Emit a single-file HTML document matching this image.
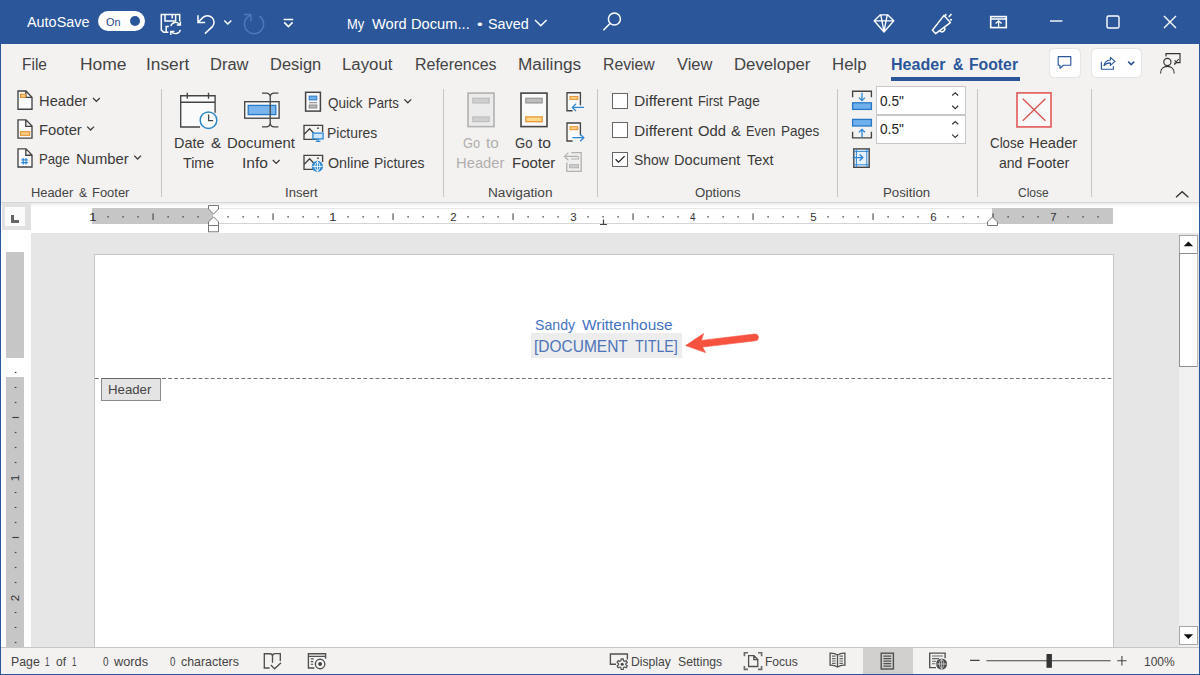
<!DOCTYPE html><html><head><meta charset="utf-8"><title>Word</title><style>
html,body{margin:0;padding:0}
body{width:1200px;height:675px;overflow:hidden;position:relative;background:#fff;font-family:"Liberation Sans",sans-serif}
.abs{position:absolute}
.t{position:absolute;white-space:nowrap;line-height:1;transform-origin:0 0}
.sep{top:88.5px;width:1px;height:108.5px;background:#c8c6c4}
.cb{width:15.6px;height:15.4px;background:#fff;border:1px solid #666;box-sizing:border-box}
.spin{width:90.2px;height:28.6px;background:#fff;border:1px solid #c8c8c8;box-sizing:border-box}
</style></head><body>
<!-- backgrounds -->
<div class="abs" style="left:0;top:0;width:1200px;height:44px;background:#2b579a"></div>
<div class="abs" style="left:0;top:44px;width:1200px;height:158px;background:#f3f2f1"></div>
<div class="abs" style="left:0;top:202px;width:1200px;height:1px;background:#d8d6d4"></div>
<div class="abs" style="left:0;top:203px;width:1200px;height:30px;background:#fff"></div>
<div class="abs" style="left:0;top:203px;width:1200px;height:4px;background:linear-gradient(#ebebeb,#fff)"></div>
<div class="abs" style="left:0;top:233px;width:31px;height:415px;background:#fff"></div>
<div class="abs" style="left:31px;top:233px;width:1169px;height:415px;background:#e6e6e6"></div>
<!-- page -->
<div class="abs" style="left:94px;top:254px;width:1018px;height:394px;background:#fff;border:1px solid #c6c6c6;border-bottom:none"></div>
<!-- status bar -->
<div class="abs" style="left:0;top:647px;width:1200px;height:28px;background:#f3f2f1;border-top:1px solid #c8c6c4;box-sizing:border-box"></div>
<div class="abs" style="left:863px;top:648px;width:49.7px;height:25.7px;background:#d1d0ce"></div>
<!-- window border -->
<div class="abs" style="left:0;top:44px;width:1.2px;height:631px;background:#2b579a"></div>
<div class="abs" style="left:1198.6px;top:44px;width:1.4px;height:631px;background:#2b579a"></div>
<div class="abs" style="left:0;top:673.7px;width:1200px;height:1.3px;background:#2b579a"></div>

<div class="abs" style="left:1.5px;top:203px;width:29px;height:27.3px;background:#e1e1e1"></div>
<div class="abs" style="left:4.7px;top:206.5px;width:20.7px;height:19.7px;background:#fbfbfb"></div>
<div class="abs" style="left:11.2px;top:215px;width:2.8px;height:8px;background:#666"></div>
<div class="abs" style="left:11.2px;top:220px;width:7.7px;height:3px;background:#666"></div>
<div class="abs" style="left:92px;top:207.5px;width:121px;height:16.5px;background:#c6c6c6"></div>
<div class="abs" style="left:213px;top:207.5px;width:779px;height:16.5px;background:#fff;border-top:1px solid #e8e8e8;border-bottom:1px solid #d4d4d4;box-sizing:border-box"></div>
<div class="abs" style="left:992px;top:207.5px;width:121px;height:16.5px;background:#c6c6c6"></div>
<svg class="abs" style="left:0;top:203px" width="1200" height="32" viewBox="0 203 1200 32"><rect x="107.5" y="216" width="1.2" height="1.6" fill="#444"/><rect x="122.5" y="216" width="1.2" height="1.6" fill="#444"/><rect x="137.5" y="216" width="1.2" height="1.6" fill="#444"/><rect x="152.5" y="213.4" width="1.1" height="6.5" fill="#444"/><rect x="167.5" y="216" width="1.2" height="1.6" fill="#444"/><rect x="182.5" y="216" width="1.2" height="1.6" fill="#444"/><rect x="197.5" y="216" width="1.2" height="1.6" fill="#444"/><rect x="227.5" y="216" width="1.2" height="1.6" fill="#444"/><rect x="242.5" y="216" width="1.2" height="1.6" fill="#444"/><rect x="257.5" y="216" width="1.2" height="1.6" fill="#444"/><rect x="272.5" y="213.4" width="1.1" height="6.5" fill="#444"/><rect x="287.5" y="216" width="1.2" height="1.6" fill="#444"/><rect x="302.5" y="216" width="1.2" height="1.6" fill="#444"/><rect x="317.5" y="216" width="1.2" height="1.6" fill="#444"/><rect x="347.5" y="216" width="1.2" height="1.6" fill="#444"/><rect x="362.5" y="216" width="1.2" height="1.6" fill="#444"/><rect x="377.5" y="216" width="1.2" height="1.6" fill="#444"/><rect x="392.5" y="213.4" width="1.1" height="6.5" fill="#444"/><rect x="407.5" y="216" width="1.2" height="1.6" fill="#444"/><rect x="422.5" y="216" width="1.2" height="1.6" fill="#444"/><rect x="437.5" y="216" width="1.2" height="1.6" fill="#444"/><rect x="467.5" y="216" width="1.2" height="1.6" fill="#444"/><rect x="482.5" y="216" width="1.2" height="1.6" fill="#444"/><rect x="497.5" y="216" width="1.2" height="1.6" fill="#444"/><rect x="512.5" y="213.4" width="1.1" height="6.5" fill="#444"/><rect x="527.5" y="216" width="1.2" height="1.6" fill="#444"/><rect x="542.5" y="216" width="1.2" height="1.6" fill="#444"/><rect x="557.5" y="216" width="1.2" height="1.6" fill="#444"/><rect x="587.5" y="216" width="1.2" height="1.6" fill="#444"/><rect x="602.5" y="216" width="1.2" height="1.6" fill="#444"/><rect x="617.5" y="216" width="1.2" height="1.6" fill="#444"/><rect x="632.5" y="213.4" width="1.1" height="6.5" fill="#444"/><rect x="647.5" y="216" width="1.2" height="1.6" fill="#444"/><rect x="662.5" y="216" width="1.2" height="1.6" fill="#444"/><rect x="677.5" y="216" width="1.2" height="1.6" fill="#444"/><rect x="707.5" y="216" width="1.2" height="1.6" fill="#444"/><rect x="722.5" y="216" width="1.2" height="1.6" fill="#444"/><rect x="737.5" y="216" width="1.2" height="1.6" fill="#444"/><rect x="752.5" y="213.4" width="1.1" height="6.5" fill="#444"/><rect x="767.5" y="216" width="1.2" height="1.6" fill="#444"/><rect x="782.5" y="216" width="1.2" height="1.6" fill="#444"/><rect x="797.5" y="216" width="1.2" height="1.6" fill="#444"/><rect x="827.5" y="216" width="1.2" height="1.6" fill="#444"/><rect x="842.5" y="216" width="1.2" height="1.6" fill="#444"/><rect x="857.5" y="216" width="1.2" height="1.6" fill="#444"/><rect x="872.5" y="213.4" width="1.1" height="6.5" fill="#444"/><rect x="887.5" y="216" width="1.2" height="1.6" fill="#444"/><rect x="902.5" y="216" width="1.2" height="1.6" fill="#444"/><rect x="917.5" y="216" width="1.2" height="1.6" fill="#444"/><rect x="947.5" y="216" width="1.2" height="1.6" fill="#444"/><rect x="962.5" y="216" width="1.2" height="1.6" fill="#444"/><rect x="977.5" y="216" width="1.2" height="1.6" fill="#444"/><rect x="992.5" y="213.4" width="1.1" height="6.5" fill="#444"/><rect x="1007.5" y="216" width="1.2" height="1.6" fill="#444"/><rect x="1022.5" y="216" width="1.2" height="1.6" fill="#444"/><rect x="1037.5" y="216" width="1.2" height="1.6" fill="#444"/><rect x="1067.5" y="216" width="1.2" height="1.6" fill="#444"/><rect x="1082.5" y="216" width="1.2" height="1.6" fill="#444"/><rect x="1097.5" y="216" width="1.2" height="1.6" fill="#444"/><path d="M603.5 219.5v5M600 224.5h7" stroke="#444" stroke-width="1.2" fill="none"/><path d="M208.5 205.5h10v3.5l-5 5.2l-5-5.2z" fill="#fff" stroke="#777" stroke-width="1"/><path d="M208.5 225.5v-3.6l5-5l5 5v3.6z" fill="#fff" stroke="#777" stroke-width="1"/><rect x="208.5" y="225.5" width="10" height="6.3" fill="#fff" stroke="#777" stroke-width="1"/><path d="M987.5 225.5v-3.6l5-5l5 5v3.6z" fill="#fff" stroke="#777" stroke-width="1"/></svg>
<div class="abs" style="left:5.6px;top:252.4px;width:18px;height:105.4px;background:#c6c6c6"></div>
<div class="abs" style="left:5.6px;top:357.8px;width:18px;height:19.6px;background:#fff"></div>
<div class="abs" style="left:5.6px;top:377.4px;width:18px;height:270px;background:#c6c6c6"></div>
<svg class="abs" style="left:0;top:350px" width="31" height="298" viewBox="0 350 31 298"><rect x="14.8" y="371.9" width="1.6" height="1.2" fill="#444"/><rect x="14.8" y="386.9" width="1.6" height="1.2" fill="#444"/><rect x="14.8" y="401.9" width="1.6" height="1.2" fill="#444"/><rect x="12.4" y="416.9" width="6.5" height="1.2" fill="#444"/><rect x="14.8" y="431.9" width="1.6" height="1.2" fill="#444"/><rect x="14.8" y="446.9" width="1.6" height="1.2" fill="#444"/><rect x="14.8" y="461.9" width="1.6" height="1.2" fill="#444"/><rect x="14.8" y="491.9" width="1.6" height="1.2" fill="#444"/><rect x="14.8" y="506.9" width="1.6" height="1.2" fill="#444"/><rect x="14.8" y="521.9" width="1.6" height="1.2" fill="#444"/><rect x="12.4" y="536.9" width="6.5" height="1.2" fill="#444"/><rect x="14.8" y="551.9" width="1.6" height="1.2" fill="#444"/><rect x="14.8" y="566.9" width="1.6" height="1.2" fill="#444"/><rect x="14.8" y="581.9" width="1.6" height="1.2" fill="#444"/><rect x="14.8" y="611.9" width="1.6" height="1.2" fill="#444"/><rect x="14.8" y="626.9" width="1.6" height="1.2" fill="#444"/><rect x="14.8" y="641.9" width="1.6" height="1.2" fill="#444"/></svg>
<!-- toggle pill -->
<div class="abs" style="left:98px;top:11px;width:47px;height:20.4px;border-radius:10.2px;background:#fff"></div>
<div class="abs" style="left:130px;top:16.3px;width:10px;height:10px;border-radius:5px;background:#2b579a"></div>
<!-- tab underline -->
<div class="abs" style="left:891px;top:77px;width:129px;height:3.6px;background:#2b579a"></div>
<!-- comment/share buttons -->
<div class="abs" style="left:1049.7px;top:48.7px;width:30.6px;height:28.8px;border-radius:4px;background:#fff;box-shadow:0 0 1.5px rgba(0,0,0,.25)"></div>
<div class="abs" style="left:1091.7px;top:48.7px;width:49.6px;height:28.8px;border-radius:4px;background:#fff;box-shadow:0 0 1.5px rgba(0,0,0,.25)"></div>
<!-- ribbon separators -->
<div class="abs sep" style="left:161px"></div>
<div class="abs sep" style="left:443px"></div>
<div class="abs sep" style="left:597px"></div>
<div class="abs sep" style="left:837px"></div>
<div class="abs sep" style="left:976.5px"></div>
<div class="abs sep" style="left:1090.5px"></div>
<!-- checkboxes -->
<div class="abs cb" style="left:612px;top:93.3px"></div>
<div class="abs cb" style="left:612px;top:122.4px"></div>
<div class="abs cb" style="left:612px;top:151.5px"></div>
<svg class="abs" style="left:612px;top:151.5px" width="16" height="16" viewBox="0 0 16 16"><path d="M3.6 7.3l3 2.9l6-6.1" stroke="#222" stroke-width="1.3" fill="none"/></svg>
<!-- spin boxes -->
<div class="abs spin" style="left:876.3px;top:86.4px"></div>
<div class="abs spin" style="left:876.3px;top:115px"></div>
<svg class="abs" style="left:948px;top:86px" width="14" height="58" viewBox="948 86 14 58" fill="none" stroke="#333" stroke-width="1.2"><path d="M952.200 95.500l3-2.800l3 2.800M952.200 105.800l3 2.800l3-2.800M952.200 124.300l3-2.800l3 2.800M952.200 134.600l3 2.800l3-2.800"/></svg>
<!-- collapse chevron -->
<svg class="abs" style="left:1174px;top:189px" width="16" height="10" viewBox="1174 189 16 10" fill="none" stroke="#333" stroke-width="1.3"><path d="M1176 197.3l6.2-5.6l6.2 5.6"/></svg>

<!-- doc content -->
<div class="abs" style="left:530.8px;top:333.2px;width:151.2px;height:24.8px;background:#ededed"></div>

<svg class="abs" style="left:94px;top:376px" width="1020" height="4" viewBox="94 376 1020 4"><path d="M95 378.5H1113" stroke="#707070" stroke-width="1" stroke-dasharray="3.7 2.4"/></svg>
<div class="abs" style="left:101px;top:377.7px;width:59.5px;height:22.9px;background:#e4e4e4;border:1px solid #8c8c8c;border-top:1.3px solid #666;box-sizing:border-box"></div>
<svg class="abs" style="left:680px;top:326px" width="84" height="32" viewBox="680 326 84 32"><path d="M685.600 345.600L703.600 333.600L701.400 340.400L754.600 334A3.400 3.400 0 0 1 755.400 340.800L702.500 347.100L705.500 352.600Z" fill="#f6523f" stroke="#f6523f" stroke-width="0.600" stroke-linejoin="round"/></svg>
<!-- scrollbar -->
<div class="abs" style="left:1179px;top:235px;width:19.3px;height:412px;background:#f0f0f0"></div>
<div class="abs" style="left:1179px;top:235.3px;width:18.8px;height:18.4px;background:#fff;border:1px solid #a6a6a6;box-sizing:border-box"></div>
<div class="abs" style="left:1179px;top:253.4px;width:18.8px;height:113.4px;background:#fff;border:1px solid #8e8e8e;border-right-color:#bdbdbd;box-sizing:border-box"></div>
<div class="abs" style="left:1179px;top:626px;width:18.8px;height:18.8px;background:#fff;border:1px solid #a6a6a6;box-sizing:border-box"></div>
<svg class="abs" style="left:1179px;top:235px" width="19" height="412" viewBox="1179 235 19 412"><path d="M1183.6 246.2h9.6l-4.8-4.8z" fill="#111"/><path d="M1183.6 634.2h9.6l-4.8 4.8z" fill="#111"/></svg>

<!-- title bar icons -->
<svg class="abs" style="left:0;top:0" width="1200" height="44" viewBox="0 0 1200 44" fill="none" stroke="#fff" stroke-width="1.5">
<!-- save -->
<path d="M168.400 32.200h-4.800l-2.300-2.300v-15.300h18.400v6.600"/>
<path d="M165 14.800v6.200h10.600v-6.200M172.200 14.800v3.600"/>
<path d="M166.200 32v-5.600h2.600"/>
<path d="M170.800 26.200a5 5 0 0 1 9-1.600M180.400 21.400v3.600h-3.600M180.400 29.800a5 5 0 0 1 -9 1.600M170.800 35v-3.600h3.600" stroke-width="1.4"/>
<!-- undo -->
<path d="M198 15.2v7.2h7.2"/>
<path d="M198.4 22l4.6-4.6a6.6 6.6 0 0 1 9.6 9l-7.7 7.2"/>
<path d="M224.3 20.6l3.5 3.5l3.5-3.5" stroke-width="1.4"/>
<!-- redo faded -->
<path d="M250.900 14.500H244.200M250.900 14.500V21.300M250.600 14.800L247.400 17.200A9.600 9.600 0 1 0 259.400 16.100" stroke="#5079bb" stroke-width="1.400"/>
<!-- qat -->
<path d="M283.6 19.4h9.6M284.2 22.4l4.2 4.2l4.2-4.2"/>
<!-- search -->
<circle cx="614.4" cy="19" r="6"/><path d="M610 23.4l-6.6 6.8"/>
<!-- diamond -->
<path d="M880.400 14.800H887.600L893.800 20.800L884 32L874.200 20.800ZM874.400 20.800H893.600M880.800 15L884 31.600M887.200 15L884 31.600" stroke-linejoin="round" stroke-width="1.350"/>
<!-- megaphone -->
<path d="M944 15.400L950.400 22.600L935.600 33.600L932.400 30.200zM939.800 30.600a2.700 2.700 0 0 0 4.400-3.400" stroke-linejoin="round"/>
<path d="M946 15.800l-0.500-1.900M948.700 17l2.800-2.900M950 19.500l2 0.500"/>
<!-- ribbon display -->
<rect x="990.700" y="16.600" width="15.600" height="11" stroke-width="1.600"/><path d="M990.700 19h15.600M998.600 27.600v-6.400M995.600 23.600l3-2.800l3 2.800" stroke-width="1.300"/>
<!-- window controls -->
<path d="M1050 21h12.4" stroke-width="1.4"/>
<rect x="1107" y="16" width="12" height="12" rx="1.6" stroke-width="1.4"/>
<path d="M1164 16l12 12M1176 16l-12 12" stroke-width="1.4"/>
<!-- title chevron -->
<path d="M535 20l5.8 5.8l5.8-5.8" stroke-width="1.4"/>
</svg>
<!-- tab-row icons -->
<svg class="abs" style="left:1040px;top:44px" width="160" height="40" viewBox="1040 44 160 40" fill="none" stroke="#2b579a" stroke-width="1.15">
<path d="M1058.2 56.6h12.6v8.6h-7.4l-3.4 3v-3h-1.8z" stroke-linejoin="round"/>
<path d="M1101.4 61.8v7.4h12v-3M1104 65.6c0.6-3.4 3-5.4 6.4-5.6v-2.6l4.6 4l-4.6 4v-2.6c-2.6 0-4.8 0.8-6.4 2.8z" stroke-linejoin="round"/>
<path d="M1128.2 61.6l3 3l3-3" stroke-width="1.5"/>
<g stroke="#333"><circle cx="1167.4" cy="62" r="3.6"/><path d="M1160.6 73.4c0-4.6 3-7 6.8-7s6.800 2.400 6.800 7"/><path d="M1166 56.600v-3h14v9h-3.600l-1.600 1.600v-1.600"/><path d="M1174.600 60.400l1.600 1.600l2.600-3" stroke-width="1.100"/></g>
</svg>
<!-- small ribbon chevrons -->
<svg class="abs" style="left:0;top:84px" width="1200" height="118" viewBox="0 84 1200 118" fill="none" stroke="#3b3a39" stroke-width="1.3">
<path d="M93 98l3.400 3.400l3.400-3.400M87.200 126.600l3.400 3.400l3.400-3.400M134.200 155.600l3.400 3.400l3.400-3.400M272.800 160l3.400 3.400l3.400-3.400M404.400 99.400l3.400 3.400l3.400-3.400"/>
</svg>

<!-- ribbon icons -->
<svg class="abs" style="left:0;top:84px" width="1200" height="118" viewBox="0 84 1200 118" fill="none" stroke="#444" stroke-width="1.35" stroke-linejoin="miter">
<defs>
<path id="docic" d="M0.700 0.700h8l6 6.200v12h-14zM8.500 0.900v6.200h6" fill="#fafafa"/>
<path id="picfr" d="M14 14.600h-13.300v-13.900h18.600v6.500M0.900 9.500l5.400-5.400l4 4.200" />
</defs>
<!-- Header / Footer / Page number -->
<g transform="translate(17.300,90.300)"><use href="#docic"/><rect x="3.200" y="3.900" width="5" height="3.200" fill="#fbd08a" stroke="#e8912d" stroke-width="1.100"/></g>
<g transform="translate(17.300,119.200)"><use href="#docic"/><rect x="3.200" y="12.500" width="9.200" height="3.600" fill="#fbd08a" stroke="#e8912d" stroke-width="1.100"/></g>
<g transform="translate(17.300,148.100)"><use href="#docic"/><path d="M4 11.700h6.600M4 14.500h6.600M5.900 9.800v6.600M8.700 9.800v6.600" stroke="#2e88d6" stroke-width="1.200"/></g>
<!-- Date & time -->
<path d="M200 127h-19.300v-31.300h34.400v17" fill="#fafafa"/>
<path d="M180.700 102.200h34.400M187.300 92.700v6M208.500 92.700v6"/>
<circle cx="208.500" cy="120.200" r="8.300" fill="#fff" stroke="#2e88c9" stroke-width="1.500"/>
<path d="M208.600 114.600v6.100h4.600" stroke-width="1.300"/>
<!-- Document info -->
<rect x="244.700" y="101.700" width="34.400" height="16.500" fill="#fafafa"/>
<rect x="248.200" y="105.400" width="27.600" height="9.200" fill="#79b5ec" stroke="#2878c8" stroke-width="1.300"/>
<path d="M270.200 96v28M262 93.200h4.200a4 4 0 0 1 4 3.400a4 4 0 0 1 4-3.400h4.200M262 126.800h4.200a4 4 0 0 0 4-3.400a4 4 0 0 0 4 3.400h4.200" stroke-width="1.300"/>
<!-- quick parts -->
<rect x="305.600" y="92.300" width="14.800" height="18.800" fill="#fafafa" stroke-width="1.500"/>
<rect x="309.200" y="96.100" width="7.600" height="3.800" fill="#6fb1ec" stroke="#2878c8" stroke-width="1"/>
<path d="M309 102.700h8" stroke="#888" stroke-width="1.100"/>
<rect x="309.200" y="105" width="7.600" height="3" fill="#bbb" stroke="#888" stroke-width="1"/>
<!-- pictures -->
<g transform="translate(303.300,124.700)"><use href="#picfr"/><circle cx="14.700" cy="3.500" r="0.900" fill="#444" stroke="none"/>
<rect x="9.600" y="8.400" width="10.200" height="5.800" fill="#cfe6fa" stroke="#2e88d6" stroke-width="1.300"/><path d="M12.500 16.600h4.600M14.800 14.400v2" stroke="#2e88d6" stroke-width="1.300"/></g>
<!-- online pictures -->
<g transform="translate(303.300,154.700)"><use href="#picfr"/><circle cx="14.700" cy="3.500" r="0.900" fill="#444" stroke="none"/>
<circle cx="14.100" cy="11.700" r="5.600" fill="#2e8bd8" stroke="none"/><path d="M9 11.700h10.200M14.100 6.600v10.200M14.100 6.800c-3.400 3-3.400 6.800 0 9.800c3.400-3 3.400-6.800 0-9.800" stroke="#fff" stroke-width="0.900"/></g>
<!-- go to header (disabled) -->
<rect x="468" y="93.100" width="26" height="33.500" fill="#ebebeb" stroke="#b3b1af" stroke-width="1.600"/>
<rect x="472.800" y="98.200" width="16.400" height="4.800" fill="#cfcfcf" stroke="#b8b8b8" stroke-width="1"/>
<rect x="472.800" y="116.900" width="16.400" height="4.800" fill="#cfcfcf" stroke="#b8b8b8" stroke-width="1"/>
<!-- go to footer -->
<rect x="521" y="93.100" width="26" height="33.500" fill="#fafafa" stroke="#444" stroke-width="1.600"/>
<rect x="525.800" y="98.200" width="16.400" height="4.800" fill="#bdbdbd" stroke="#8c8c8c" stroke-width="1"/>
<rect x="525.800" y="116.900" width="16.400" height="4.800" fill="#ffd98a" stroke="#e8912d" stroke-width="1.200"/>
<!-- previous / next / link -->
<path d="M572.600 110.700h-5.600v-18h13.400v12.500" fill="#fafafa"/>
<rect x="570" y="96.400" width="7.800" height="3" fill="#fbd08a" stroke="#e8912d" stroke-width="1"/>
<path d="M584 107.400h-11.400M576 103.800l-3.600 3.600l3.600 3.600" stroke="#2e88d6" stroke-width="1.300"/>
<path d="M572.600 141h-5.600v-18h13.400v12.500" fill="#fafafa"/>
<rect x="570" y="126.700" width="7.800" height="3" fill="#fbd08a" stroke="#e8912d" stroke-width="1"/>
<path d="M572.400 137.700h11.400M580.200 134.100l3.600 3.600l-3.600 3.600" stroke="#2e88d6" stroke-width="1.300"/>
<g stroke="#b3b1af" stroke-width="1.300"><path d="M571.300 152.600H581.200V171.300H566.800V162.400" fill="#efefef"/><path d="M564.600 156.400H578.200M568.400 152.600l-3.900 3.800l3.900 3.800"/><path d="M571 159H578.400V156.400" stroke-width="1.100"/><rect x="569.600" y="164.700" width="8.800" height="3.100" fill="#cfcfcf" stroke-width="1"/></g>
<!-- position icons -->
<path d="M852.600 97.300v-6.100h18.800v6.100"/>
<rect x="852.600" y="102.800" width="18.800" height="6.600" fill="#6fb1ec" stroke="#2878c8" stroke-width="1.300"/>
<path d="M862 92.700v7.600M859 97.600l3 3l3-3" stroke="#2e88d6" stroke-width="1.300"/>
<rect x="852.600" y="119.400" width="18.800" height="6.600" fill="#6fb1ec" stroke="#2878c8" stroke-width="1.300"/>
<path d="M852.600 131.800v6.100h18.800v-6.100"/>
<path d="M862 137.200v-7.800M859 132.300l3-3l3 3" stroke="#2e88d6" stroke-width="1.300"/>
<rect x="853.800" y="148.900" width="15.400" height="18.400" fill="#e6f1fb" stroke-width="1.400"/>
<path d="M856.400 149v18.200M866.800 149v18.200M854 151.400h15M854 164.800h15" stroke="#2e88d6" stroke-width="1"/>
<path d="M852.600 157.600h10M859.600 154.400l3.200 3.200l-3.200 3.200" stroke="#2e88d6" stroke-width="1.400"/>
<!-- close -->
<rect x="1017" y="92.900" width="34" height="34" fill="#f8f8f8" stroke="#e46a6a" stroke-width="1.800"/>
<path d="M1022.800 98.800l22.600 22M1045.400 98.800l-22.600 22" stroke="#d9534f" stroke-width="1.300"/>
</svg>

<!-- status bar icons -->
<svg class="abs" style="left:0;top:648px" width="1200" height="27" viewBox="0 648 1200 27" fill="none" stroke="#505050" stroke-width="1.35">
<!-- spelling book -->
<path d="M269.600 668h-5.300v-14.300h5.600q2.600 0 2.600 2.400v6.600M272.500 656.100q0-2.400 2.600-2.400h5.200v7.400M270.800 665l3.800 3.800l6.400-6"/>
<!-- macro -->
<path d="M314.400 668h-6v-14.300h17.200v5M308.400 656.300h17.200" /><path d="M310.800 658.900h3M310.800 661.600h2.400M310.800 664.200h2.400" stroke-width="1.100"/>
<circle cx="320.100" cy="664" r="4.700" fill="#f8f8f8" stroke-width="1.400"/><circle cx="320.100" cy="664" r="2" fill="#444" stroke="none"/>
<!-- display settings -->
<path d="M616 664.200h-5.600v-10.200h17v5.600"/>
<path d="M620.90 660.74L621.13 658.91L623.27 658.91L623.50 660.74L624.55 661.34L626.25 660.62L627.32 662.48L625.85 663.60L625.85 664.80L627.32 665.92L626.25 667.78L624.55 667.06L623.50 667.66L623.27 669.49L621.13 669.49L620.90 667.66L619.85 667.06L618.15 667.78L617.08 665.92L618.55 664.80L618.55 663.60L617.08 662.48L618.15 660.62L619.85 661.34Z" stroke-width="1.2" stroke-linejoin="round" fill="#f3f2f1"/>
<circle cx="622.200" cy="664.200" r="1.500" fill="#444" stroke="none"/>
<!-- focus -->
<path d="M744.400 656.200v-3.400h3.600M758 652.800h3.600v3.400M761.600 666v3.400h-3.600M748 669.400h-3.600v-3.400" stroke="#6a6a6a" stroke-width="1.600"/>
<path d="M748.600 655.700h5.400l3.800 3.800v7h-9.200zM753.800 655.900v3.800h3.800" stroke-width="1.300"/>
<!-- read mode -->
<path d="M837.500 655v12M837.500 655q-3-2-7.400-1.800v12q4.400-0.200 7.400 1.800q3-2 7.400-1.800v-12q-4.400-0.200-7.400 1.800" stroke-width="1.300"/>
<path d="M832 656.200h3.600M832 658.600h3.600M832 661h3.600M832 663.400h3.600M839.400 656.200h3.600M839.400 658.600h3.600M839.400 661h3.600M839.400 663.400h3.600" stroke="#666" stroke-width="1.200"/>
<!-- print layout -->
<rect x="881.200" y="653.200" width="12.200" height="15.800" stroke-width="1.400"/>
<path d="M883.400 656.100h7.800M883.400 658.600h7.800M883.400 661.100h7.800M883.400 663.600h7.800M883.400 666.100h7.800" stroke-width="1.300"/>
<!-- web layout -->
<path d="M936 667.600h-6.300v-14.400h15.400v5"/>
<path d="M932 656h11M932 658.600h7M932 661.200h4M932 663.800h3.400" stroke="#666" stroke-width="1.100"/>
<circle cx="941.600" cy="664" r="5.500" fill="#4a4a4a" stroke="none"/>
<path d="M936.400 664h10.400M941.600 658.800v10.400M941.600 659c-3 3-3 7 0 10c3-3 3-7 0-10" stroke="#d8d8d8" stroke-width="0.800"/>
<!-- zoom -->
<path d="M970 660.400h9.600M986.400 660.800h124.200M1117.200 660.800h9.400M1121.900 656.100v9.400" stroke="#444" stroke-width="1.100"/>
<rect x="1046.500" y="654" width="5.400" height="13.800" fill="#333" stroke="none"/>
</svg>

<span class="abs" style="left:9px;top:471.5px;width:12px;height:12px;line-height:12px;font-size:11.5px;color:#333;text-align:center;transform:rotate(-90deg)">1</span>
<span class="abs" style="left:9px;top:591.5px;width:12px;height:12px;line-height:12px;font-size:11.5px;color:#333;text-align:center;transform:rotate(-90deg)">2</span>
<span class="t" id="t0" style="left:27.40px;top:14.03px;font-size:15.2px;color:#fff;transform:scaleX(0.9485);">AutoSave</span>
<span class="t" id="t1" style="left:106.20px;top:16.59px;font-size:11px;color:#24477f;transform:scaleX(0.9857);">On</span>
<span class="t" id="t2" style="left:346.84px;top:15.83px;font-size:15.2px;color:#fff;transform:scaleX(0.8550);">My</span>
<span class="t" id="t3" style="left:371.90px;top:15.83px;font-size:15.2px;color:#fff;transform:scaleX(0.9629);">Word</span>
<span class="t" id="t4" style="left:411.33px;top:15.83px;font-size:15.2px;color:#fff;transform:scaleX(0.9661);">Docum...</span>
<span class="t" id="t5" style="left:477.00px;top:17.70px;font-size:13px;color:#fff;transform:scaleX(1.2500);">•</span>
<span class="t" id="t6" style="left:487.76px;top:15.83px;font-size:15.2px;color:#fff;transform:scaleX(0.9439);">Saved</span>
<span class="t" id="t7" style="left:21.91px;top:56.59px;font-size:15.6px;color:#444;transform:scaleX(0.9917);">File</span>
<span class="t" id="t8" style="left:79.78px;top:56.59px;font-size:15.6px;color:#444;transform:scaleX(1.1200);">Home</span>
<span class="t" id="t9" style="left:146.29px;top:56.59px;font-size:15.6px;color:#444;transform:scaleX(1.1079);">Insert</span>
<span class="t" id="t10" style="left:209.84px;top:56.59px;font-size:15.6px;color:#444;transform:scaleX(1.0583);">Draw</span>
<span class="t" id="t11" style="left:270.34px;top:56.59px;font-size:15.6px;color:#444;transform:scaleX(1.0553);">Design</span>
<span class="t" id="t12" style="left:341.82px;top:56.59px;font-size:15.6px;color:#444;transform:scaleX(1.0783);">Layout</span>
<span class="t" id="t13" style="left:414.88px;top:56.59px;font-size:15.6px;color:#444;transform:scaleX(1.0228);">References</span>
<span class="t" id="t14" style="left:517.99px;top:56.59px;font-size:15.6px;color:#444;transform:scaleX(1.1054);">Mailings</span>
<span class="t" id="t15" style="left:603.09px;top:56.59px;font-size:15.6px;color:#444;transform:scaleX(1.0120);">Review</span>
<span class="t" id="t16" style="left:677.40px;top:56.59px;font-size:15.6px;color:#444;transform:scaleX(1.0559);">View</span>
<span class="t" id="t17" style="left:734.03px;top:56.59px;font-size:15.6px;color:#444;transform:scaleX(1.0743);">Developer</span>
<span class="t" id="t18" style="left:831.82px;top:56.59px;font-size:15.6px;color:#444;transform:scaleX(1.0774);">Help</span>
<span class="t" id="t19" style="left:891.37px;top:56.59px;font-size:15.6px;color:#2b579a;transform:scaleX(1.0288);font-weight:bold">Header</span>
<span class="t" id="t20" style="left:953.30px;top:56.59px;font-size:15.6px;color:#2b579a;transform:scaleX(0.9182);font-weight:bold">&amp;</span>
<span class="t" id="t21" style="left:969.29px;top:56.59px;font-size:15.6px;color:#2b579a;transform:scaleX(1.0104);font-weight:bold">Footer</span>
<span class="t" id="t22" style="left:39.09px;top:93.84px;font-size:14.6px;color:#3b3a39;transform:scaleX(1.0085);">Header</span>
<span class="t" id="t23" style="left:39.09px;top:122.84px;font-size:14.6px;color:#3b3a39;transform:scaleX(1.0146);">Footer</span>
<span class="t" id="t24" style="left:39.30px;top:152.14px;font-size:14.6px;color:#3b3a39;transform:scaleX(0.9030);">Page</span>
<span class="t" id="t25" style="left:75.58px;top:152.14px;font-size:14.6px;color:#3b3a39;transform:scaleX(1.0176);">Number</span>
<span class="t" id="t26" style="left:174.01px;top:135.64px;font-size:14.6px;color:#3b3a39;transform:scaleX(0.9900);">Date</span>
<span class="t" id="t27" style="left:211.00px;top:135.64px;font-size:14.6px;color:#3b3a39;transform:scaleX(1.0500);">&amp;</span>
<span class="t" id="t28" style="left:183.40px;top:155.94px;font-size:14.6px;color:#3b3a39;transform:scaleX(0.9781);">Time</span>
<span class="t" id="t29" style="left:227.38px;top:135.84px;font-size:14.6px;color:#3b3a39;transform:scaleX(1.0212);">Document</span>
<span class="t" id="t30" style="left:241.83px;top:155.94px;font-size:14.6px;color:#3b3a39;transform:scaleX(1.0696);">Info</span>
<span class="t" id="t31" style="left:327.80px;top:95.54px;font-size:14.6px;color:#3b3a39;transform:scaleX(0.9263);">Quick</span>
<span class="t" id="t32" style="left:368.30px;top:95.54px;font-size:14.6px;color:#3b3a39;transform:scaleX(0.9030);">Parts</span>
<span class="t" id="t33" style="left:326.95px;top:126.34px;font-size:14.6px;color:#3b3a39;transform:scaleX(0.9538);">Pictures</span>
<span class="t" id="t34" style="left:327.90px;top:156.04px;font-size:14.6px;color:#3b3a39;transform:scaleX(0.9786);">Online</span>
<span class="t" id="t35" style="left:373.94px;top:156.04px;font-size:14.6px;color:#3b3a39;transform:scaleX(0.9558);">Pictures</span>
<span class="t" id="t36" style="left:462.60px;top:135.84px;font-size:14.6px;color:#b1afad;transform:scaleX(0.8789);">Go</span>
<span class="t" id="t37" style="left:485.60px;top:135.84px;font-size:14.6px;color:#b1afad;transform:scaleX(1.0500);">to</span>
<span class="t" id="t38" style="left:456.09px;top:155.94px;font-size:14.6px;color:#b1afad;transform:scaleX(1.0128);">Header</span>
<span class="t" id="t39" style="left:515.20px;top:135.84px;font-size:14.6px;color:#3b3a39;transform:scaleX(0.9000);">Go</span>
<span class="t" id="t40" style="left:538.40px;top:135.84px;font-size:14.6px;color:#3b3a39;transform:scaleX(1.0750);">to</span>
<span class="t" id="t41" style="left:511.87px;top:155.94px;font-size:14.6px;color:#3b3a39;transform:scaleX(1.0268);">Footer</span>
<span class="t" id="t42" style="left:633.83px;top:94.44px;font-size:14.6px;color:#3b3a39;transform:scaleX(1.0667);">Different</span>
<span class="t" id="t43" style="left:697.52px;top:94.44px;font-size:14.6px;color:#3b3a39;transform:scaleX(0.8786);">First</span>
<span class="t" id="t44" style="left:728.17px;top:94.44px;font-size:14.6px;color:#3b3a39;transform:scaleX(0.9303);">Page</span>
<span class="t" id="t45" style="left:633.83px;top:123.64px;font-size:14.6px;color:#3b3a39;transform:scaleX(1.0667);">Different</span>
<span class="t" id="t46" style="left:697.90px;top:123.64px;font-size:14.6px;color:#3b3a39;transform:scaleX(1.0148);">Odd</span>
<span class="t" id="t47" style="left:731.20px;top:123.64px;font-size:14.6px;color:#3b3a39;transform:scaleX(1.0100);">&amp;</span>
<span class="t" id="t48" style="left:746.22px;top:123.64px;font-size:14.6px;color:#3b3a39;transform:scaleX(0.8812);">Even</span>
<span class="t" id="t49" style="left:780.77px;top:123.64px;font-size:14.6px;color:#3b3a39;transform:scaleX(0.9250);">Pages</span>
<span class="t" id="t50" style="left:633.95px;top:152.74px;font-size:14.6px;color:#3b3a39;transform:scaleX(0.9528);">Show</span>
<span class="t" id="t51" style="left:674.40px;top:152.74px;font-size:14.6px;color:#3b3a39;transform:scaleX(0.9985);">Document</span>
<span class="t" id="t52" style="left:747.10px;top:152.74px;font-size:14.6px;color:#3b3a39;transform:scaleX(0.9889);">Text</span>
<span class="t" id="t53" style="left:880.10px;top:93.84px;font-size:14.6px;color:#222;transform:scaleX(0.9360);">0.5"</span>
<span class="t" id="t54" style="left:880.10px;top:122.34px;font-size:14.6px;color:#222;transform:scaleX(0.9360);">0.5"</span>
<span class="t" id="t55" style="left:989.70px;top:135.74px;font-size:14.6px;color:#3b3a39;transform:scaleX(0.9135);">Close</span>
<span class="t" id="t56" style="left:1029.19px;top:135.74px;font-size:14.6px;color:#3b3a39;transform:scaleX(1.0085);">Header</span>
<span class="t" id="t57" style="left:998.90px;top:156.14px;font-size:14.6px;color:#3b3a39;transform:scaleX(0.9625);">and</span>
<span class="t" id="t58" style="left:1027.29px;top:156.14px;font-size:14.6px;color:#3b3a39;transform:scaleX(1.0073);">Footer</span>
<span class="t" id="t59" style="left:30.63px;top:186.84px;font-size:12.0px;color:#444;transform:scaleX(1.0718);">Header</span>
<span class="t" id="t60" style="left:79.40px;top:186.84px;font-size:12.0px;color:#444;transform:scaleX(1.0125);">&amp;</span>
<span class="t" id="t61" style="left:91.82px;top:186.84px;font-size:12.0px;color:#444;transform:scaleX(1.0794);">Footer</span>
<span class="t" id="t62" style="left:285.31px;top:186.84px;font-size:12.0px;color:#444;transform:scaleX(1.0897);">Insert</span>
<span class="t" id="t63" style="left:488.06px;top:186.84px;font-size:12.0px;color:#444;transform:scaleX(1.1382);">Navigation</span>
<span class="t" id="t64" style="left:694.70px;top:186.84px;font-size:12.0px;color:#444;transform:scaleX(1.1000);">Options</span>
<span class="t" id="t65" style="left:883.30px;top:186.84px;font-size:12.0px;color:#444;transform:scaleX(1.1049);">Position</span>
<span class="t" id="t66" style="left:1018.00px;top:186.84px;font-size:12.0px;color:#444;transform:scaleX(1.0000);">Close</span>
<span class="t" id="t67" style="left:89.00px;top:211.77px;font-size:11.5px;color:#333;transform:scaleX(1.2000);">1</span>
<span class="t" id="t68" style="left:329.00px;top:211.77px;font-size:11.5px;color:#333;transform:scaleX(1.2000);">1</span>
<span class="t" id="t69" style="left:450.20px;top:211.77px;font-size:11.5px;color:#333;transform:scaleX(1.0000);">2</span>
<span class="t" id="t70" style="left:570.20px;top:211.77px;font-size:11.5px;color:#333;transform:scaleX(1.0000);">3</span>
<span class="t" id="t71" style="left:690.20px;top:211.77px;font-size:11.5px;color:#333;transform:scaleX(0.8571);">4</span>
<span class="t" id="t72" style="left:810.20px;top:211.77px;font-size:11.5px;color:#333;transform:scaleX(1.0000);">5</span>
<span class="t" id="t73" style="left:930.20px;top:211.77px;font-size:11.5px;color:#333;transform:scaleX(1.0000);">6</span>
<span class="t" id="t74" style="left:1050.20px;top:211.77px;font-size:11.5px;color:#333;transform:scaleX(1.0000);">7</span>
<span class="t" id="t75" style="left:535.02px;top:317.61px;font-size:14.4px;color:#4472c4;transform:scaleX(0.9825);">Sandy</span>
<span class="t" id="t76" style="left:582.20px;top:317.61px;font-size:14.4px;color:#4472c4;transform:scaleX(1.0702);">Writtenhouse</span>
<span class="t" id="t77" style="left:534.14px;top:338.39px;font-size:16.2px;color:#4c74b8;transform:scaleX(0.9567);">[DOCUMENT</span>
<span class="t" id="t78" style="left:634.80px;top:338.39px;font-size:16.2px;color:#4c74b8;transform:scaleX(0.8813);">TITLE]</span>
<span class="t" id="t79" style="left:108.13px;top:383.80px;font-size:12.4px;color:#444;transform:scaleX(1.0675);">Header</span>
<span class="t" id="t80" style="left:10.82px;top:655.83px;font-size:12.6px;color:#444;transform:scaleX(0.9786);">Page</span>
<span class="t" id="t81" style="left:45.17px;top:655.83px;font-size:12.6px;color:#444;transform:scaleX(0.6333);">1</span>
<span class="t" id="t82" style="left:56.20px;top:655.83px;font-size:12.6px;color:#444;transform:scaleX(0.9545);">of</span>
<span class="t" id="t83" style="left:72.27px;top:655.83px;font-size:12.6px;color:#444;transform:scaleX(0.6333);">1</span>
<span class="t" id="t84" style="left:102.80px;top:655.83px;font-size:12.6px;color:#444;transform:scaleX(0.7857);">0</span>
<span class="t" id="t85" style="left:113.90px;top:655.83px;font-size:12.6px;color:#444;transform:scaleX(1.0147);">words</span>
<span class="t" id="t86" style="left:170.10px;top:655.83px;font-size:12.6px;color:#444;transform:scaleX(0.7714);">0</span>
<span class="t" id="t87" style="left:181.20px;top:655.83px;font-size:12.6px;color:#444;transform:scaleX(0.9847);">characters</span>
<span class="t" id="t88" style="left:630.73px;top:655.83px;font-size:12.6px;color:#444;transform:scaleX(0.9659);">Display</span>
<span class="t" id="t89" style="left:677.90px;top:655.83px;font-size:12.6px;color:#444;transform:scaleX(0.9696);">Settings</span>
<span class="t" id="t90" style="left:764.94px;top:655.83px;font-size:12.6px;color:#444;transform:scaleX(0.9576);">Focus</span>
<span class="t" id="t91" style="left:1143.65px;top:655.83px;font-size:12.6px;color:#444;transform:scaleX(0.9548);">100%</span>
</body></html>
